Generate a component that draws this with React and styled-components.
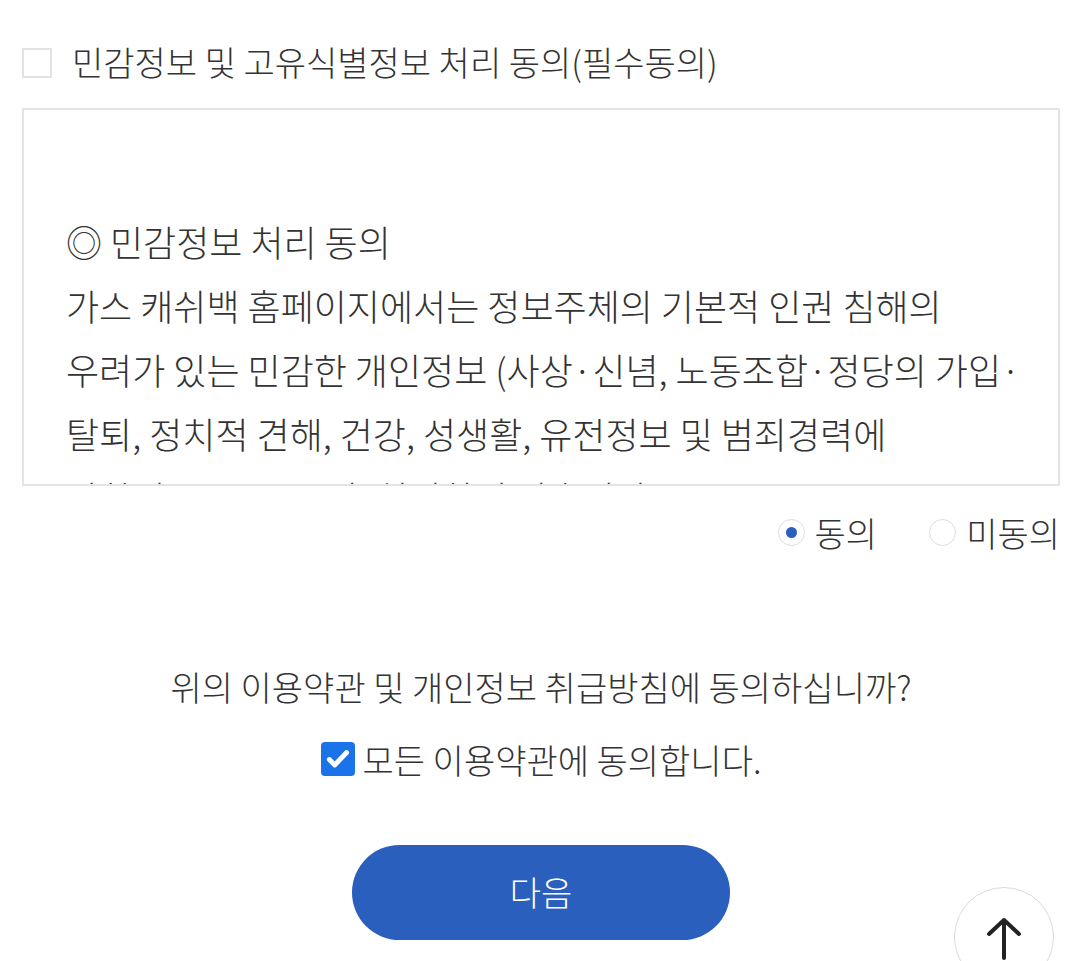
import React, { useState } from 'react'
import styled, { createGlobalStyle } from 'styled-components'

const GlobalStyle = createGlobalStyle`
  html, body {
    margin: 0;
    padding: 0;
    background: #fff;
  }
  body {
    font-family: "Noto Sans CJK KR", "Noto Sans", sans-serif;
    font-weight: 300;
    color: #333;
  }
`

const Page = styled.div`
  width: 1080px;
  height: 961px;
  overflow: hidden;
  padding: 0 20px 0 22px;
  box-sizing: border-box;
`

const TermHead = styled.label`
  display: flex;
  align-items: center;
  gap: 20px;
  height: 60px;
  margin-top: 31px;
  font-size: 34px;
  color: #333;
`

const EmptyBox = styled.span`
  width: 26px;
  height: 26px;
  margin-top: 3px;
  border: 2px solid #e2e2e2;
  background: #fff;
  flex: none;
`

const TermBox = styled.div`
  margin-top: 17px;
  height: 378px;
  box-sizing: border-box;
  border: 2px solid #e4e4e4;
  overflow: hidden;
  padding: 99px 20px 0 42px;
  font-size: 36px;
  line-height: 64px;
  color: #333;
  white-space: nowrap;
`

const RadioRow = styled.div`
  display: flex;
  justify-content: flex-end;
  align-items: center;
  gap: 52px;
  height: 60px;
  margin-top: 16px;
  font-size: 34px;
  color: #333;
`

const RadioOption = styled.label`
  display: flex;
  align-items: center;
  gap: 10px;
`

const RadioMark = styled.span`
  width: 25px;
  height: 25px;
  border-radius: 50%;
  border: 1px solid #dcdcdc;
  background: #fff;
  display: flex;
  align-items: center;
  justify-content: center;
  &::after {
    content: '';
    width: 11px;
    height: 11px;
    border-radius: 50%;
    background: ${p => (p.$on ? '#2a5fbd' : 'transparent')};
  }
`

const Question = styled.p`
  margin: 100px 0 0;
  line-height: 50px;
  text-align: center;
  font-size: 34px;
  color: #333;
`

const AllAgree = styled.label`
  display: flex;
  justify-content: center;
  align-items: center;
  gap: 8px;
  height: 50px;
  margin-top: 22px;
  font-size: 34px;
  color: #333;
`

const CheckMark = styled.span`
  width: 34px;
  height: 34px;
  border-radius: 4px;
  background: ${p => (p.$on ? '#1a73e8' : '#fff')};
  display: flex;
  align-items: center;
  justify-content: center;
  flex: none;
`

const NextButton = styled.button`
  display: block;
  margin: 61px auto 0;
  width: 378px;
  height: 95px;
  border: none;
  border-radius: 48px;
  background: #2a5fbd;
  color: #fff;
  font-family: inherit;
  font-weight: 300;
  font-size: 34px;
  padding-bottom: 4px;
  cursor: pointer;
`

const TopButton = styled.button`
  position: fixed;
  left: 954px;
  top: 887px;
  width: 100px;
  height: 100px;
  border-radius: 50%;
  border: 1px solid #dadada;
  background: #fff;
  display: flex;
  align-items: flex-start;
  justify-content: center;
  padding-top: 28px;
  box-sizing: border-box;
`

export default function App() {
  const [choice, setChoice] = useState('agree')
  const [all, setAll] = useState(true)

  return (
    <Page>
      <GlobalStyle />
      <TermHead>
        <EmptyBox />
        민감정보 및 고유식별정보 처리 동의(필수동의)
      </TermHead>
      <TermBox>
        ◎ 민감정보 처리 동의<br />
        가스 캐쉬백 홈페이지에서는 정보주체의 기본적 인권 침해의<br />
        우려가 있는 민감한 개인정보 (사상·신념, 노동조합·정당의 가입·<br />
        탈퇴, 정치적 견해, 건강, 성생활, 유전정보 및 범죄경력에<br />
        관한정보 등)는 수집, 처리하지 않습니다.
      </TermBox>
      <RadioRow>
        <RadioOption onClick={() => setChoice('agree')}>
          <RadioMark $on={choice === 'agree'} />
          동의
        </RadioOption>
        <RadioOption onClick={() => setChoice('deny')}>
          <RadioMark $on={choice === 'deny'} />
          미동의
        </RadioOption>
      </RadioRow>
      <Question>위의 이용약관 및 개인정보 취급방침에 동의하십니까?</Question>
      <AllAgree onClick={() => setAll(!all)}>
        <CheckMark $on={all}>
          <svg width="26" height="26" viewBox="0 0 24 24">
            <path d="M4 12.5l5 5L20 6" fill="none" stroke="#fff" strokeWidth="4.5" strokeLinecap="round" strokeLinejoin="round" />
          </svg>
        </CheckMark>
        모든 이용약관에 동의합니다.
      </AllAgree>
      <NextButton>다음</NextButton>
      <TopButton aria-label="맨 위로">
        <svg width="38" height="44" viewBox="0 0 38 44">
          <path d="M19 42V4M4 18L19 4l15 14" fill="none" stroke="#222" strokeWidth="4" strokeLinecap="round" strokeLinejoin="round" />
        </svg>
      </TopButton>
    </Page>
  )
}
